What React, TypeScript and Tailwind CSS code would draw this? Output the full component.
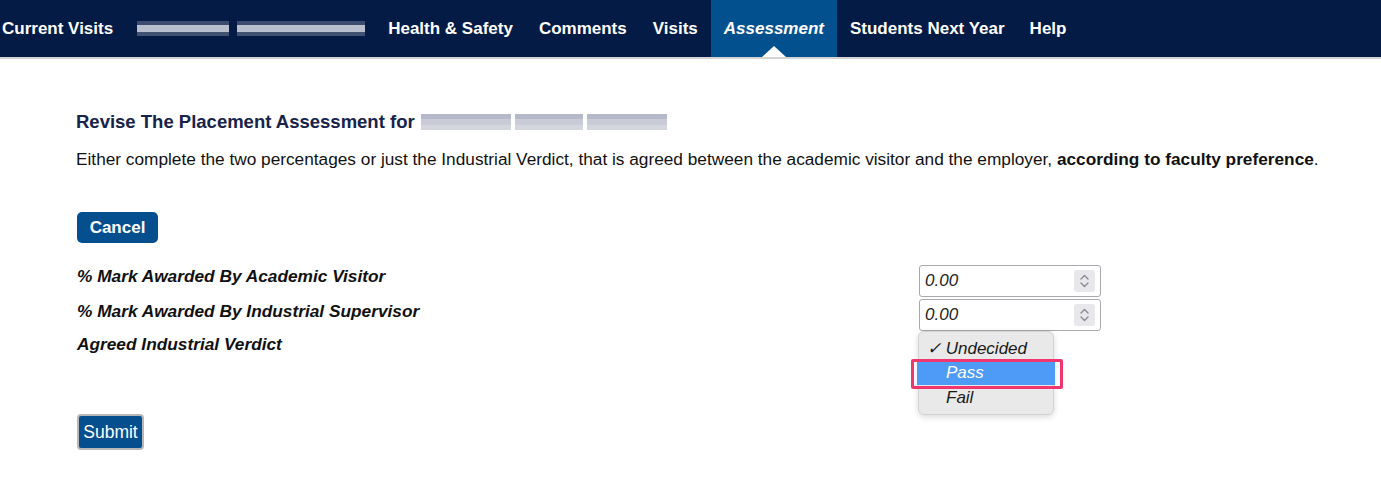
import React from "react";

const font = { fontFamily: '"Liberation Sans", Arial, Helvetica, sans-serif' };

function Blur({ widths }: { widths: number[] }) {
  return (
    <div className="flex items-center gap-[8px]">
      {widths.map((w, i) => (
        <div key={i} className="flex flex-col" style={{ width: w }}>
          <div className="h-[4px] w-full bg-[#8e97ad]/40" />
          <div className="h-[7px] w-full bg-[#b9bfcd]" />
          <div className="h-[4px] w-full bg-[#7d87a0]/50" />
        </div>
      ))}
    </div>
  );
}

function BlurLight({ widths }: { widths: number[] }) {
  return (
    <div className="flex items-center gap-[4px]">
      {widths.map((w, i) => (
        <div key={i} className="flex flex-col" style={{ width: w }}>
          <div className="h-[5px] w-full bg-[#b4b8c8]" />
          <div className="h-[6px] w-full bg-[#c9ccd6]" />
          <div className="h-[5px] w-full bg-[#d4d6de]" />
        </div>
      ))}
    </div>
  );
}

function Spinner() {
  return (
    <div className="w-[21px] h-[22px] bg-[#e7e7ec] rounded-[3px] flex items-center justify-center">
      <svg width="11" height="16" viewBox="0 0 11 16" fill="none" stroke="#8a8a92" strokeWidth="1.4" strokeLinecap="round" strokeLinejoin="round">
        <path d="M2 6 L5.5 2.5 L9 6" />
        <path d="M2 10 L5.5 13.5 L9 10" />
      </svg>
    </div>
  );
}

function NumInput() {
  return (
    <div className="h-[32px] w-[182px] border-[1.5px] border-[#a9a9ad] rounded-[3px] bg-white flex items-center justify-between pl-[5px] pr-[5px]">
      <span className="italic font-normal text-[17px] text-[#222]">0.00</span>
      <Spinner />
    </div>
  );
}

export default function App() {
  const items = ["Health & Safety", "Comments", "Visits"];
  return (
    <div className="w-[1381px] h-[482px] bg-white overflow-hidden" style={font}>
      <nav className="h-[57px] bg-[#041b45] flex items-stretch border-b-[2px] border-[#d3d3d6] box-content">
        <div className="flex items-center pl-[2px] pr-[12px] text-white font-bold text-[17px]">Current Visits</div>
        <div className="flex items-center pl-[12px] pr-[10px]">
          <Blur widths={[92, 128]} />
        </div>
        {items.map((t) => (
          <div key={t} className="flex items-center px-[13px] text-white font-bold text-[17px]">{t}</div>
        ))}
        <div className="relative flex items-center px-[13px] bg-[#03508f] text-white font-bold italic text-[17px]">
          Assessment
          <div className="absolute bottom-0 left-1/2 -translate-x-1/2 w-0 h-0 border-l-[12px] border-r-[12px] border-b-[11px] border-l-transparent border-r-transparent border-b-white" />
        </div>
        <div className="flex items-center px-[13px] text-white font-bold text-[17px]">Students Next Year</div>
        <div className="flex items-center px-[12px] text-white font-bold text-[17px]">Help</div>
      </nav>

      <main className="pl-[76px] pt-[52px]">
        <h2 className="flex items-center gap-[6px] text-[18.5px] font-bold text-[#17234b] leading-[22px]">
          <span>Revise The Placement Assessment for</span>
          <BlurLight widths={[90, 68, 80]} />
        </h2>
        <p className="mt-[15px] text-[17.25px] text-[#111] leading-[22px]">
          Either complete the two percentages or just the Industrial Verdict, that is agreed between the academic visitor and the employer, <b>according to faculty preference</b>.
        </p>

        <button className="mt-[42px] ml-[1px] h-[31px] w-[81px] rounded-[5px] bg-[#064f8f] text-white font-bold text-[17px] flex items-center justify-center">
          Cancel
        </button>

        <div className="mt-[22px] grid grid-cols-[842px_182px] gap-y-[2px] text-[17.3px] font-bold italic text-[#111]">
          <div className="pl-[1px] flex items-start pt-[1px] h-[32px] leading-[20px]">% Mark Awarded By Academic Visitor</div>
          <div className="ml-[1px]"><NumInput /></div>
          <div className="pl-[1px] flex items-start pt-[2px] h-[32px] leading-[20px]">% Mark Awarded By Industrial Supervisor</div>
          <div className="ml-[1px]"><NumInput /></div>
          <div className="pl-[1px] flex items-start pt-[1px] h-[30px] leading-[20px]">Agreed Industrial Verdict</div>
          <div className="relative h-[30px]">
            <div className="absolute left-0 top-[-2px] w-[136px] h-[84px] bg-[#e9e9e9] rounded-[6px] border border-[#d3d3d3] shadow-[0_2px_6px_rgba(0,0,0,0.15)] flex flex-col pt-[5px] font-normal">
              <div className="h-[24px] flex items-center pl-[8px] italic text-[17px] text-[#1a1a1a]">✓ Undecided</div>
              <div className="h-[24px] flex items-center pl-[27px] italic text-[17px] text-white bg-[#4d9bf6] -mx-[2px]">
                <span className="pl-[2px]">Pass</span>
              </div>
              <div className="h-[25px] flex items-center pl-[27px] italic text-[17px] text-[#1a1a1a]">Fail</div>
            </div>
            <div className="absolute left-[-7px] top-[26px] w-[152px] h-[30px] border-[3.5px] border-[#f0356f] rounded-[2px]" />
          </div>
        </div>

        <button className="mt-[51px] ml-[1px] h-[36px] w-[67px] rounded-[4px] bg-[#064f8f] text-white text-[17.5px] border-[2px] border-[#b8b8b8] flex items-center justify-center">
          Submit
        </button>
      </main>
    </div>
  );
}
